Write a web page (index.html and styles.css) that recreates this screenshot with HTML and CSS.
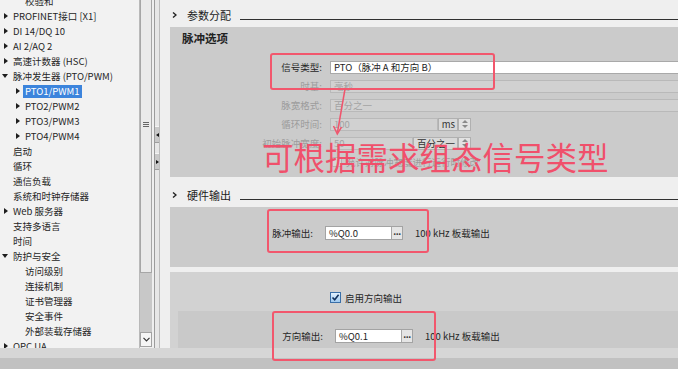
FILE: index.html
```html
<!DOCTYPE html>
<html lang="zh-CN">
<head>
<meta charset="utf-8">
<title>PTO/PWM 参数分配</title>
<link rel="stylesheet" href="styles.css">
</head>
<body>
<div class="app">
  <div class="workspace">
    <aside class="tree-pane">
      <ul class="tree">
        <li class="row lvl2"><span class="twisty"></span><span class="lbl">校验和</span></li>
        <li class="row lvl1"><span class="twisty"><i class="tri-r"></i></span><span class="lbl">PROFINET接口 [X1]</span></li>
        <li class="row lvl1"><span class="twisty"><i class="tri-r"></i></span><span class="lbl">DI 14/DQ 10</span></li>
        <li class="row lvl1"><span class="twisty"><i class="tri-r"></i></span><span class="lbl">AI 2/AQ 2</span></li>
        <li class="row lvl1"><span class="twisty"><i class="tri-r"></i></span><span class="lbl">高速计数器 (HSC)</span></li>
        <li class="row lvl1"><span class="twisty"><i class="tri-d"></i></span><span class="lbl">脉冲发生器 (PTO/PWM)</span></li>
        <li class="row lvl2"><span class="twisty"><i class="tri-r"></i></span><span class="lbl sel">PTO1/PWM1</span></li>
        <li class="row lvl2"><span class="twisty"><i class="tri-r"></i></span><span class="lbl">PTO2/PWM2</span></li>
        <li class="row lvl2"><span class="twisty"><i class="tri-r"></i></span><span class="lbl">PTO3/PWM3</span></li>
        <li class="row lvl2"><span class="twisty"><i class="tri-r"></i></span><span class="lbl">PTO4/PWM4</span></li>
        <li class="row lvl1"><span class="twisty"></span><span class="lbl">启动</span></li>
        <li class="row lvl1"><span class="twisty"></span><span class="lbl">循环</span></li>
        <li class="row lvl1"><span class="twisty"></span><span class="lbl">通信负载</span></li>
        <li class="row lvl1"><span class="twisty"></span><span class="lbl">系统和时钟存储器</span></li>
        <li class="row lvl1"><span class="twisty"><i class="tri-r"></i></span><span class="lbl">Web 服务器</span></li>
        <li class="row lvl1"><span class="twisty"></span><span class="lbl">支持多语言</span></li>
        <li class="row lvl1"><span class="twisty"></span><span class="lbl">时间</span></li>
        <li class="row lvl1"><span class="twisty"><i class="tri-d"></i></span><span class="lbl">防护与安全</span></li>
        <li class="row lvl2"><span class="twisty"></span><span class="lbl">访问级别</span></li>
        <li class="row lvl2"><span class="twisty"></span><span class="lbl">连接机制</span></li>
        <li class="row lvl2"><span class="twisty"></span><span class="lbl">证书管理器</span></li>
        <li class="row lvl2"><span class="twisty"></span><span class="lbl">安全事件</span></li>
        <li class="row lvl2"><span class="twisty"></span><span class="lbl">外部装载存储器</span></li>
        <li class="row lvl1"><span class="twisty"><i class="tri-r"></i></span><span class="lbl">OPC UA</span></li>
      </ul>
    </aside>

    <div class="vscroll">
      <div class="thumb"><span class="grip"></span></div>
      <div class="track"></div>
      <div class="sb-btn">
        <svg width="7" height="5" viewBox="0 0 7 5"><path d="M0.5 0.8 L3.5 3.8 L6.5 0.8" fill="none" stroke="#333" stroke-width="1.2"/></svg>
      </div>
    </div>

    <div class="splitter">
      <div class="rail">
        <span class="split-btn"><i class="tri-l-s"></i></span>
        <span class="split-btn"><i class="tri-r-s"></i></span>
      </div>
    </div>

    <main class="editor">
      <div class="sec-head">
        <svg class="chev" width="5" height="6" viewBox="0 0 5 6"><path d="M1 0.5 L4 3 L1 5.5" fill="none" stroke="#222" stroke-width="1.4"/></svg>
        <span class="sec-title">参数分配</span>
        <span class="sec-line"></span>
      </div>
      <div class="panel p1">
        <div class="panel-title">脉冲选项</div>
        <div class="frow">
          <span class="flabel">信号类型:</span>
          <span class="inp wide">PTO（脉冲 A 和方向 B）</span>
        </div>
        <div class="frow">
          <span class="flabel dim">时基:</span>
          <span class="inp wide dis">毫秒</span>
        </div>
        <div class="frow">
          <span class="flabel dim">脉宽格式:</span>
          <span class="inp wide dis">百分之一</span>
        </div>
        <div class="frow">
          <span class="flabel dim">循环时间:</span>
          <span class="inp dis w-cyc">100</span>
          <span class="unit w-ms">ms</span>
          <span class="spin"><i class="s-up"></i><i class="s-dn"></i></span>
        </div>
        <div class="frow">
          <span class="flabel dim">初始脉冲宽度:</span>
          <span class="inp dis w-init">50</span>
          <span class="unit w-pct">百分之一</span>
          <span class="spin"><i class="s-up"></i><i class="s-dn"></i></span>
        </div>
        <div class="frow">
          <span class="flabel"></span>
          <span class="cb-off"></span>
          <span class="cb-text dim">允许对脉冲宽度进行运行时修改</span>
        </div>
      </div>

      <div class="sec-head sec2">
        <svg class="chev" width="5" height="6" viewBox="0 0 5 6"><path d="M1 0.5 L4 3 L1 5.5" fill="none" stroke="#222" stroke-width="1.4"/></svg>
        <span class="sec-title">硬件输出</span>
        <span class="sec-line"></span>
      </div>
      <div class="panel p2">
        <div class="frow">
          <span class="flabel l-pulse">脉冲输出:</span>
          <span class="addr"><span class="addr-val">%Q0.0</span><span class="dots">...</span></span>
          <span class="note">100 kHz 板载输出</span>
        </div>
      </div>

      <div class="panel p3">
        <div class="cb-row">
          <span class="cb-on">
            <svg width="9" height="9" viewBox="0 0 9 9"><path d="M1.5 4.5 L3.7 6.8 L7.6 1.8" fill="none" stroke="#12315c" stroke-width="1.6"/></svg>
          </span>
          <span class="cb-label">启用方向输出</span>
        </div>
        <div class="subpanel">
          <div class="frow">
            <span class="flabel l-dir">方向输出:</span>
            <span class="addr"><span class="addr-val">%Q0.1</span><span class="dots">...</span></span>
            <span class="note">100 kHz 板载输出</span>
          </div>
        </div>
      </div>
    </main>
  </div>
  <div class="status-a"></div>
  <div class="status-b"></div>

  <div class="overlay">
    <div class="rbox rb1"></div>
    <div class="rbox rb2"></div>
    <div class="rbox rb3"></div>
    <svg class="arrow" width="678" height="369" viewBox="0 0 678 369">
      <path d="M345 89 L337.5 132" fill="none" stroke="#f0546c" stroke-width="1.5"/>
      <path d="M333.5 126 L337.3 134 L341.5 127.2" fill="none" stroke="#f0546c" stroke-width="1.5"/>
    </svg>
    <div class="big-note">可根据需求组态信号类型</div>
  </div>
</div>
</body>
</html>
```

FILE: styles.css
```css
* { box-sizing: border-box; }
html, body { margin: 0; padding: 0; }
body {
  width: 678px;
  height: 369px;
  overflow: hidden;
  font-family: "Noto Sans CJK SC", "Noto Sans", sans-serif;
  font-size: 9.5px;
  color: #262626;
  background: #efefef;
}
.app { position: relative; width: 678px; height: 369px; overflow: hidden; }
.workspace { display: flex; height: 348px; overflow: hidden; }

/* tree */
.tree-pane { width: 139px; flex: none; background: #f2f2f2; overflow: hidden; }
.tree { list-style: none; margin: -6.5px 0 0 0; padding: 0; }
.row { display: flex; align-items: center; height: 15px; line-height: 15px; white-space: nowrap; }
.row.lvl1 { padding-left: 3px; }
.row.lvl2 { padding-left: 15px; }
.twisty { width: 10px; flex: none; display: flex; align-items: center; height: 15px; }
.tri-r { display: block; width: 0; height: 0; border-left: 4px solid #1e1e1e; border-top: 3px solid transparent; border-bottom: 3px solid transparent; margin-left: 1px; }
.tri-d { display: block; width: 0; height: 0; border-top: 4px solid #1e1e1e; border-left: 3px solid transparent; border-right: 3px solid transparent; margin-left: -1px; }
.lbl { display: block; }
.lbl.sel { background: #3c84dc; color: #ffffff; margin-left: -2px; padding: 0 2px; line-height: 13px; height: 13px; }

/* scrollbar */
.vscroll { width: 13px; flex: none; display: flex; flex-direction: column; background: #f0f0f0; border-left: 1px solid #b9b9b9; }
.thumb { height: 273px; background: #eaeaea; border: 1px solid #a6a6a6; border-top: none; display: flex; justify-content: center; padding-top: 122px; }
.grip { display: block; width: 6px; height: 5px; border-top: 1px solid #666; border-bottom: 1px solid #666; position: relative; }
.grip::after { content: ""; position: absolute; left: 0; right: 0; top: 1px; height: 1px; background: #666; }
.track { height: 59px; background: #c8c8c8; }
.sb-btn { height: 15px; background: #f5f5f5; border: 1px solid #a2a2a2; display: flex; align-items: center; justify-content: center; }

/* splitter */
.splitter { width: 8px; flex: none; background: #efefef; padding-left: 2px; }
.rail { height: 100%; border-left: 1px solid #9c9c9c; border-right: 1px solid #bdbdbd; background: #e7e7e7; display: flex; flex-direction: column; padding-top: 126px; gap: 10px; }
.split-btn { height: 17px; background: #c9c9c9; display: flex; align-items: center; justify-content: center; border-top: 1px solid #f5f5f5; border-bottom: 1px solid #9e9e9e; }
.tri-l-s { display: block; width: 0; height: 0; border-right: 3px solid #111; border-top: 2.5px solid transparent; border-bottom: 2.5px solid transparent; }
.tri-r-s { display: block; width: 0; height: 0; border-left: 3px solid #111; border-top: 2.5px solid transparent; border-bottom: 2.5px solid transparent; }

/* editor */
.editor { flex: 1; min-width: 0; background: #efefef; padding: 3px 0 0 10px; overflow: hidden; }
.sec-head { height: 24px; display: flex; align-items: center; }
.sec2 { margin-top: 6px; }
.chev { margin-left: 2px; flex: none; }
.sec-title { margin-left: 10px; font-size: 11px; color: #222; }
.sec-line { flex: 1; height: 1px; background: #303030; margin-left: 9px; margin-top: 8px; }

.panel { background: #cbcbcb; }
.p1 { height: 150px; padding: 3px 0 0 12px; }
.panel-title { font-size: 11.5px; font-weight: bold; line-height: 16px; height: 16px; color: #222; margin-bottom: 11.5px; }
.frow { display: flex; align-items: center; height: 19px; white-space: nowrap; }
.flabel { width: 140px; flex: none; text-align: right; margin-right: 8px; color: #262626; }
.dim { color: #9c9c9c; }
.inp { display: block; height: 13px; line-height: 11px; border: 1px solid #a9a9a9; background: #ffffff; padding-left: 3px; color: #1e1e1e; flex: none; overflow: hidden; }
.inp.wide { width: 360px; }
.inp.dis { background: #d1d1d1; border-color: #b9b9b9; color: #a3a3a3; }
.w-cyc { width: 108px; }
.w-init { width: 83px; }
.unit { display: block; height: 13px; line-height: 11px; border: 1px solid #b0b0b0; background: #d9d9d9; color: #333; text-align: right; padding-right: 2px; flex: none; }
.w-ms { width: 20px; font-size: 9.5px; }
.w-pct { width: 45px; }
.spin { display: flex; flex-direction: column; justify-content: center; align-items: center; gap: 2px; width: 13px; height: 13px; border: 1px solid #b0b0b0; background: #e2e2e2; margin-left: 0; flex: none; }
.s-up { display: block; width: 0; height: 0; border-bottom: 3px solid #8a8a8a; border-left: 3px solid transparent; border-right: 3px solid transparent; }
.s-dn { display: block; width: 0; height: 0; border-top: 3px solid #8a8a8a; border-left: 3px solid transparent; border-right: 3px solid transparent; }
.cb-off { display: block; width: 10px; height: 10px; border: 1px solid #b3b3b3; background: #d6d6d6; margin-left: 2px; flex: none; }
.cb-text { margin-left: 4px; }

.p2 { height: 60px; padding-top: 16.5px; }
.l-pulse { width: 143px; margin-right: 12px; }
.addr { display: flex; width: 78px; height: 14px; border: 1px solid #a3a3a3; background: #ffffff; flex: none; }
.addr-val { flex: 1; padding-left: 3px; line-height: 12px; color: #1e1e1e; }
.dots { width: 11px; background: #e5e5e5; border-left: 1px solid #a8a8a8; font-size: 9px; line-height: 9px; text-align: center; font-weight: bold; color: #333; letter-spacing: -0.5px; }
.note { margin-left: 12px; color: #262626; }

.p3 { height: 76px; margin-top: 5px; background: #d2d2d2; padding-top: 20px; }
.cb-row { display: flex; align-items: center; height: 11px; padding-left: 160px; }
.cb-on { width: 11px; height: 11px; border: 1px solid #3a6fa8; background: linear-gradient(#e4f2ff, #9fcaf0); display: flex; align-items: center; justify-content: center; flex: none; }
.cb-label { margin-left: 4px; color: #262626; }
.subpanel { margin: 8px 0 0 8px; height: 37px; background: #c9c9c9; padding-top: 15.5px; }
.l-dir { width: 145px; margin-right: 12px; }

.status-a { height: 10px; background: #d6d6d6; }
.status-b { height: 11px; background: #c1c1c1; }

/* annotation overlay */
.overlay { position: absolute; left: 0; top: 0; width: 678px; height: 369px; pointer-events: none; }
.rbox { position: absolute; border: 2px solid #f2576d; border-radius: 3px; }
.rb1 { left: 270px; top: 53px; width: 225px; height: 37px; }
.rb2 { left: 267px; top: 209px; width: 162px; height: 44px; }
.rb3 { left: 272px; top: 311px; width: 164px; height: 50px; }
.arrow { position: absolute; left: 0; top: 0; }
.big-note { position: absolute; left: 262px; top: 141px; font-size: 31.5px; line-height: 1; color: #f0506b; font-family: "Noto Sans CJK SC", sans-serif; white-space: nowrap; }
```
